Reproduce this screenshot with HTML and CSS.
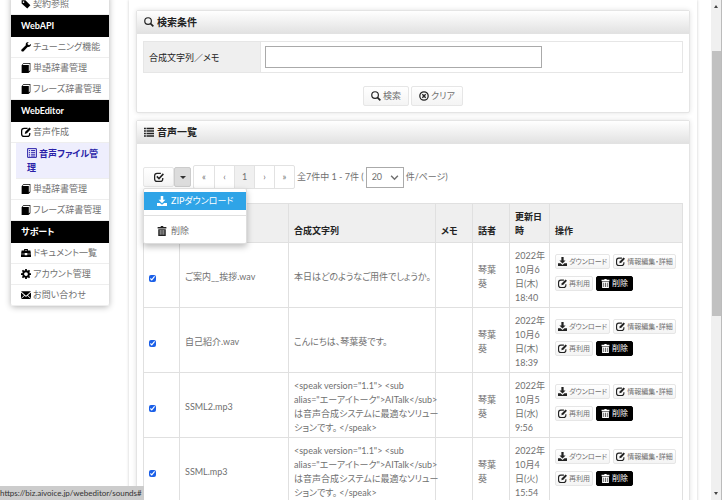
FILE: index.html
```html
<!DOCTYPE html>
<html lang="ja">
  <head>
    <meta charset="UTF-8" />
    <meta name="viewport" content="width=device-width, initial-scale=1.0" />
    <title>音声ファイル管理</title>
    <link rel="stylesheet" href="styles.css">
  </head>
  <body>
    <svg class="sprite" aria-hidden="true">
      <symbol id="i-tag" viewBox="0 0 16 16"><path d="M1 2h6l8 8-5 5-9-8z"/><circle cx="4" cy="5" r="1.3" fill="#fff"/></symbol>
      <symbol id="i-wrench" viewBox="0 0 16 16"><path d="M15.800 3.200l-3 2-2.300-1.500L10.700 1.200 13 0C9.500-.5 7 2 7.700 5L.8 12c-1.500 1.700 1.200 4.400 3 3l6.800-7c3 .7 5.800-1.700 5.200-4.800z"/></symbol>
      <symbol id="i-book" viewBox="0 0 16 16"><path d="M1 3.500L4 0h11v13l-3 3H1zM4 1.300L2.700 3H12.500v10.500L14 12V1.300z" fill-rule="evenodd"/></symbol>
      <symbol id="i-edit" viewBox="0 0 16 16"><path d="M10.500 2H5a4 4 0 0 0-4 4v5a4 4 0 0 0 4 4h5a4 4 0 0 0 4-4V9.500" fill="none" stroke="currentColor" stroke-width="2"/><path d="M6 11l.8-3.500L13.500.8 16 3.200 9.500 10z"/></symbol>
      <symbol id="i-check" viewBox="0 0 16 16"><path d="M11 2H5a4 4 0 0 0-4 4v5a4 4 0 0 0 4 4h5a4 4 0 0 0 4-4V9.500" fill="none" stroke="currentColor" stroke-width="2"/><path d="M4.500 7l3.500 3.500L15 3" fill="none" stroke="currentColor" stroke-width="2.400"/></symbol>
      <symbol id="i-listalt" viewBox="0 0 16 16"><path d="M1 1h14v14H1z" fill="none" stroke="currentColor" stroke-width="1.600"/><path d="M3 4h2M6.500 4H13M3 7h2M6.500 7H13M3 10h2M6.500 10H13M3 12.800h2M6.500 12.800H13" stroke="currentColor" stroke-width="1.500"/></symbol>
      <symbol id="i-list" viewBox="0 0 16 16"><path d="M0 1h3v2.500H0zM4 1h12v2.500H4zM0 5h3v2.500H0zM4 5h12v2.500H4zM0 9h3v2.500H0zM4 9h12v2.500H4zM0 13h3v2.500H0zM4 13h12v2.500H4z"/></symbol>
      <symbol id="i-case" viewBox="0 0 16 16"><path d="M5 4V1.500h6V4h4l1 5h-6V8H6v1H0l1-5zM6.500 4h3V3h-3zM0 10h6v1.500h4V10h6v4.500H0z" fill-rule="evenodd"/></symbol>
      <symbol id="i-cog" viewBox="0 0 16 16"><circle cx="8" cy="8" r="4.500" fill="none" stroke="currentColor" stroke-width="3"/><path d="M8 0v3.500M8 12.500V16M0 8h3.500M12.500 8H16M2.300 2.300l2.400 2.400M11.300 11.300l2.400 2.400M13.700 2.300l-2.400 2.400M4.700 11.300l-2.400 2.400" stroke="currentColor" stroke-width="2.800"/></symbol>
      <symbol id="i-mail" viewBox="0 0 16 16"><path d="M0 2h16L8 9zM0 4l5 4.500L0 13zM16 4l-5 4.500 5 4.500zM0 14.500l6-5.200 2 1.700 2-1.700 6 5.200z"/></symbol>
      <symbol id="i-search" viewBox="0 0 16 16"><circle cx="6.500" cy="6.500" r="5.300" fill="none" stroke="currentColor" stroke-width="1.900"/><path d="M10.500 10.500L15 15" stroke="currentColor" stroke-width="2.600"/></symbol>
      <symbol id="i-remove" viewBox="0 0 16 16"><circle cx="8" cy="8" r="6.700" fill="none" stroke="currentColor" stroke-width="2"/><path d="M5.300 5.300l5.400 5.400M10.700 5.300l-5.400 5.400" stroke="currentColor" stroke-width="2.200"/></symbol>
      <symbol id="i-save" viewBox="0 0 16 16"><path d="M6 0h4v6h3.500L8 11.500 2.500 6H6zM0 11h4.500L8 14l3.500-3H16v5H0z"/></symbol>
      <symbol id="i-trash" viewBox="0 0 16 16"><path d="M6 0h4v1.500h5V4H1V1.500h5zM2 5h12v11H2zM4.500 6.500V14h1V6.500zM7.500 6.500V14h1V6.500zM10.500 6.500V14h1V6.500z" fill-rule="evenodd"/></symbol>
    </svg>

    <div class="page">
      <nav class="sidebar">
        <a href="#" class="nav-item"><svg class="icon"><use href="#i-tag"/></svg>契約参照</a>
        <h2 class="nav-head">WebAPI</h2>
        <a href="#" class="nav-item"><svg class="icon"><use href="#i-wrench"/></svg>チューニング機能</a>
        <a href="#" class="nav-item"><svg class="icon"><use href="#i-book"/></svg>単語辞書管理</a>
        <a href="#" class="nav-item"><svg class="icon"><use href="#i-book"/></svg>フレーズ辞書管理</a>
        <h2 class="nav-head">WebEditor</h2>
        <a href="#" class="nav-item"><svg class="icon"><use href="#i-edit"/></svg>音声作成</a>
        <a href="#" class="nav-sub"><svg class="icon"><use href="#i-listalt"/></svg>音声ファイル管理</a>
        <a href="#" class="nav-item"><svg class="icon"><use href="#i-book"/></svg>単語辞書管理</a>
        <a href="#" class="nav-item"><svg class="icon"><use href="#i-book"/></svg>フレーズ辞書管理</a>
        <h2 class="nav-head">サポート</h2>
        <a href="#" class="nav-item"><svg class="icon"><use href="#i-case"/></svg>ドキュメント一覧</a>
        <a href="#" class="nav-item"><svg class="icon"><use href="#i-cog"/></svg>アカウント管理</a>
        <a href="#" class="nav-item"><svg class="icon"><use href="#i-mail"/></svg>お問い合わせ</a>
      </nav>

      <main class="content">
        <section class="panel">
          <h1 class="panel-head"><svg class="icon"><use href="#i-search"/></svg>検索条件</h1>
          <form class="panel-body">
            <div class="search-row">
              <label for="keyword" class="search-label">合成文字列／メモ</label>
              <div class="search-field"><input type="text" id="keyword" class="search-input" /></div>
            </div>
            <div class="search-actions">
              <button type="button" class="btn"><svg class="icon"><use href="#i-search"/></svg>検索</button>
              <button type="button" class="btn"><svg class="icon"><use href="#i-remove"/></svg>クリア</button>
            </div>
          </form>
        </section>

        <section class="panel">
          <h1 class="panel-head"><svg class="icon"><use href="#i-list"/></svg>音声一覧</h1>
          <div class="panel-body">
            <div class="toolbar">
              <div class="btn-group">
                <button type="button" class="btn btn-check" aria-label="すべて選択"><svg class="icon"><use href="#i-check"/></svg></button>
                <button type="button" class="btn btn-caret" aria-label="メニュー"><span class="caret"></span></button>
                <div class="menu">
                  <a href="#" class="menu-item active"><svg class="icon"><use href="#i-save"/></svg>ZIPダウンロード</a>
                  <hr class="menu-line" />
                  <a href="#" class="menu-item"><svg class="icon"><use href="#i-trash"/></svg>削除</a>
                </div>
              </div>
              <div class="pager">
                <a href="#">«</a>
                <a href="#">‹</a>
                <a href="#" class="current">1</a>
                <a href="#">›</a>
                <a href="#">»</a>
              </div>
              <label for="per-page" class="count">全7件中 1 - 7件 (</label>
              <div class="select-wrap">
                <select id="per-page"><option>20</option><option>50</option></select>
                <svg class="chevron" viewBox="0 0 8 8"><path d="M1 2.500l3 3 3-3" fill="none" stroke="currentColor" stroke-width="1.300"/></svg>
              </div>
              <span>件/ページ)</span>
            </div>

            <table class="sounds">
              <colgroup>
                <col class="c-check" /><col class="c-name" /><col class="c-text" /><col class="c-memo" /><col class="c-voice" /><col class="c-date" /><col />
              </colgroup>
              <thead>
                <tr>
                  <th></th>
                  <th></th>
                  <th>合成文字列</th>
                  <th>メモ</th>
                  <th>話者</th>
                  <th>更新日<br />時</th>
                  <th>操作</th>
                </tr>
              </thead>
              <tbody>
                <tr>
                  <td><input type="checkbox" aria-label="ご案内__挨拶.wav" checked /></td>
                  <td>ご案内__挨拶.wav</td>
                  <td>本日はどのようなご用件でしょうか。</td>
                  <td></td>
                  <td>琴葉<br />葵</td>
                  <td>2022年<br />10月6<br />日(木)<br />18:40</td>
                  <td>
                    <div class="actions">
                      <button type="button" class="btn btn-xs"><svg class="icon"><use href="#i-save"/></svg>ダウンロード</button>
                      <button type="button" class="btn btn-xs"><svg class="icon"><use href="#i-edit"/></svg>情報編集・詳細</button>
                      <button type="button" class="btn btn-xs"><svg class="icon"><use href="#i-edit"/></svg>再利用</button>
                      <button type="button" class="btn btn-xs btn-dark"><svg class="icon"><use href="#i-trash"/></svg>削除</button>
                    </div>
                  </td>
                </tr>
                <tr>
                  <td><input type="checkbox" aria-label="自己紹介.wav" checked /></td>
                  <td>自己紹介.wav</td>
                  <td>こんにちは、琴葉葵です。</td>
                  <td></td>
                  <td>琴葉<br />葵</td>
                  <td>2022年<br />10月6<br />日(木)<br />18:39</td>
                  <td>
                    <div class="actions">
                      <button type="button" class="btn btn-xs"><svg class="icon"><use href="#i-save"/></svg>ダウンロード</button>
                      <button type="button" class="btn btn-xs"><svg class="icon"><use href="#i-edit"/></svg>情報編集・詳細</button>
                      <button type="button" class="btn btn-xs"><svg class="icon"><use href="#i-edit"/></svg>再利用</button>
                      <button type="button" class="btn btn-xs btn-dark"><svg class="icon"><use href="#i-trash"/></svg>削除</button>
                    </div>
                  </td>
                </tr>
                <tr>
                  <td><input type="checkbox" aria-label="SSML2.mp3" checked /></td>
                  <td>SSML2.mp3</td>
                  <td>&lt;speak version="1.1"&gt; &lt;sub<br />alias="エーアイトーク"&gt;AITalk&lt;/sub&gt;<br />は音声合成システムに最適なソリュー<br />ションです。 &lt;/speak&gt;</td>
                  <td></td>
                  <td>琴葉<br />葵</td>
                  <td>2022年<br />10月5<br />日(水)<br />9:56</td>
                  <td>
                    <div class="actions">
                      <button type="button" class="btn btn-xs"><svg class="icon"><use href="#i-save"/></svg>ダウンロード</button>
                      <button type="button" class="btn btn-xs"><svg class="icon"><use href="#i-edit"/></svg>情報編集・詳細</button>
                      <button type="button" class="btn btn-xs"><svg class="icon"><use href="#i-edit"/></svg>再利用</button>
                      <button type="button" class="btn btn-xs btn-dark"><svg class="icon"><use href="#i-trash"/></svg>削除</button>
                    </div>
                  </td>
                </tr>
                <tr>
                  <td><input type="checkbox" aria-label="SSML.mp3" checked /></td>
                  <td>SSML.mp3</td>
                  <td>&lt;speak version="1.1"&gt; &lt;sub<br />alias="エーアイトーク"&gt;AITalk&lt;/sub&gt;<br />は音声合成システムに最適なソリュー<br />ションです。 &lt;/speak&gt;</td>
                  <td></td>
                  <td>琴葉<br />葵</td>
                  <td>2022年<br />10月4<br />日(火)<br />15:54</td>
                  <td>
                    <div class="actions">
                      <button type="button" class="btn btn-xs"><svg class="icon"><use href="#i-save"/></svg>ダウンロード</button>
                      <button type="button" class="btn btn-xs"><svg class="icon"><use href="#i-edit"/></svg>情報編集・詳細</button>
                      <button type="button" class="btn btn-xs"><svg class="icon"><use href="#i-edit"/></svg>再利用</button>
                      <button type="button" class="btn btn-xs btn-dark"><svg class="icon"><use href="#i-trash"/></svg>削除</button>
                    </div>
                  </td>
                </tr>
              </tbody>
            </table>
          </div>
        </section>
      </main>
    </div>

    <div class="scrollbar">
      <span class="arrow-up"></span>
      <span class="thumb"></span>
      <span class="arrow-down"></span>
    </div>
    <div class="status">https://biz.aivoice.jp/webeditor/sounds#</div>
  </body>
</html>
```
FILE: styles.css
```css
* {
  box-sizing: border-box;
}

body {
  margin: 0;
  height: 100vh;
  overflow: hidden;
  background: #fff;
  color: #707070;
  font-family: Lato, "Noto Sans CJK JP", sans-serif;
  font-size: 9px;
  line-height: 14px;
  font-feature-settings: "palt";
}

a {
  color: inherit;
  text-decoration: none;
}

button,
input,
select {
  font: inherit;
  font-feature-settings: inherit;
  color: inherit;
  margin: 0;
}

.sprite {
  position: absolute;
  width: 0;
  height: 0;
}

.icon {
  flex: none;
  width: 10px;
  height: 10px;
  color: #222;
  fill: currentColor;
}

.page {
  display: flex;
  align-items: flex-start;
  gap: 20px;
  padding: 0 25px 0 11px;
}

/* sidebar */
.sidebar {
  flex: none;
  width: 98px;
  margin-top: -6px;
  border-radius: 3px;
  background: #fff;
  box-shadow: 0 1px 6px rgba(0, 0, 0, 0.3);
}

.nav-item {
  display: flex;
  align-items: center;
  gap: 2px;
  height: 21px;
  padding-left: 10px;
  border-bottom: 1px solid #eee;
  white-space: nowrap;
}

.nav-head {
  height: 22px;
  margin: 0;
  padding-left: 10px;
  background: #000;
  color: #fff;
  font-size: 9px;
  line-height: 21px;
}

.nav-sub {
  display: block;
  height: 36px;
  margin-left: 5px;
  padding: 4px 8px 4px 11px;
  background: #eeeefd;
  border-bottom: 1px solid #eee;
  color: #2a1fa8;
  font-weight: bold;
}

.nav-sub .icon {
  margin-right: 2px;
  color: #2a1fa8;
  vertical-align: -1px;
}

.nav-item .icon {
  color: #000;
}

/* panels */
.content {
  flex: 1;
  min-width: 0;
  padding: 10px 7px;
  box-shadow: 0 0 3px rgba(0, 0, 0, 0.2);
}

.panel {
  margin-bottom: 7px;
  border: 1px solid #e4e4e4;
  border-radius: 2px;
  background: #fff;
  box-shadow: 0 0 5px rgba(0, 0, 0, 0.12);
}

.panel-head {
  display: flex;
  align-items: center;
  gap: 3px;
  height: 23px;
  margin: 0;
  padding: 0 7px;
  background: linear-gradient(#fff, #e2e2e2);
  border-bottom: 1px solid #e2e2e2;
  color: #222;
  font-size: 10px;
}

.panel-body {
  padding: 7px 6px 6px;
}

.search-row {
  display: flex;
  height: 32px;
  border: 1px solid #e6e6e6;
}

.search-label {
  width: 117px;
  padding-left: 5px;
  background: #efefef;
  border-right: 1px solid #e6e6e6;
  color: #222;
  line-height: 32px;
}

.search-field {
  flex: 1;
  padding: 4px;
}

.search-input {
  display: block;
  width: 67%;
  height: 22px;
  border: 1px solid #aaa;
  background: #fff;
}

.search-actions {
  display: flex;
  justify-content: center;
  gap: 2px;
  padding-top: 13px;
}

.btn {
  display: flex;
  align-items: center;
  justify-content: center;
  gap: 2px;
  height: 20px;
  padding: 0 7px;
  border: 1px solid #e6e6e6;
  border-radius: 2px;
  background: linear-gradient(#fff, #f4f4f4);
  white-space: nowrap;
}

/* toolbar */
.toolbar {
  display: flex;
  align-items: center;
  gap: 2px;
  height: 24px;
  margin: 14px 0;
}

.btn-group {
  position: relative;
  display: flex;
}

.btn-check {
  width: 31px;
}

.btn-caret {
  width: 17px;
  padding: 0;
  background: #dcdcdc;
  border-color: #ccc;
}

.caret {
  border: 3px solid transparent;
  border-top-color: #333;
  border-bottom: 0;
}

.menu {
  position: absolute;
  top: 21px;
  left: 0;
  width: 104px;
  padding: 3px 0;
  border: 1px solid #ddd;
  border-radius: 2px;
  background: #fff;
  box-shadow: 0 3px 6px rgba(0, 0, 0, 0.25);
}

.menu-item {
  display: flex;
  align-items: center;
  gap: 4px;
  height: 18px;
  padding-left: 13px;
}

.menu-item.active,
.menu-item.active .icon {
  background: #2fa4e7;
  color: #fff;
}

.menu-line {
  margin: 5px 0 6px;
  border: 0;
  border-top: 1px solid #e0e0e0;
}

.pager {
  display: flex;
  border: 1px solid #e2e2e2;
  border-radius: 2px;
}

.pager a {
  width: 20px;
  height: 22px;
  border-left: 1px solid #e2e2e2;
  line-height: 22px;
  text-align: center;
}

.pager a:first-child {
  border-left: 0;
}

.pager .current {
  background: #f0f0f0;
}

.select-wrap {
  position: relative;
}

.select-wrap select {
  display: block;
  appearance: none;
  width: 38px;
  height: 21px;
  padding: 0 5px;
  border: 1px solid #aaa;
  border-radius: 0;
  background: #fff;
}

.chevron {
  position: absolute;
  top: 6px;
  right: 5px;
  width: 9px;
  height: 9px;
  pointer-events: none;
}

/* list */
.sounds {
  width: 100%;
  table-layout: fixed;
  border-collapse: collapse;
}

.c-check {
  width: 36px;
}

.c-name {
  width: 109px;
}

.c-text {
  width: 147px;
}

.c-memo,
.c-voice {
  width: 37px;
}

.c-date {
  width: 40px;
}

.sounds th,
.sounds td {
  border: 1px solid #e0e0e0;
  padding: 6px 0 2px 5px;
  text-align: left;
  white-space: nowrap;
}

.sounds th {
  height: 39px;
  padding-bottom: 4px;
  background: #efefef;
  color: #222;
  vertical-align: bottom;
}

.sounds td {
  height: 65px;
  vertical-align: middle;
}

.sounds input {
  display: block;
  width: 7px;
  height: 7px;
  margin-top: 2px;
  accent-color: #1a5fe8;
}

.actions {
  display: flex;
  flex-wrap: wrap;
  gap: 7px 3px;
  margin-bottom: 10px;
}

.btn-xs {
  height: 15px;
  padding: 0 2px;
  font-size: 7px;
}

.btn-xs .icon {
  width: 9px;
  height: 9px;
}

.btn-dark {
  padding: 0 4px;
  font-size: 8px;
}

.btn-dark,
.btn-dark .icon {
  border-color: #000;
  background: #000;
  color: #fff;
}

/* window furniture */
.scrollbar {
  position: fixed;
  top: 0;
  right: 0;
  bottom: 0;
  display: flex;
  flex-direction: column;
  align-items: center;
  width: 11px;
  padding: 5px 0;
  background: #f0f0f0;
  border-right: 1px solid #bbb;
}

.arrow-up,
.arrow-down {
  border: 2px solid transparent;
}

.arrow-up {
  border-top: 0;
  border-bottom: 3px solid #444;
}

.arrow-down {
  margin-top: auto;
  border-bottom: 0;
  border-top: 3px solid #444;
}

.thumb {
  width: 9px;
  height: 54%;
  margin-top: 43px;
  background: #c1c1c1;
}

.status {
  position: fixed;
  left: 0;
  bottom: 0;
  padding-right: 2px;
  background: #ccc;
  color: #333;
  font-size: 8px;
}
```
